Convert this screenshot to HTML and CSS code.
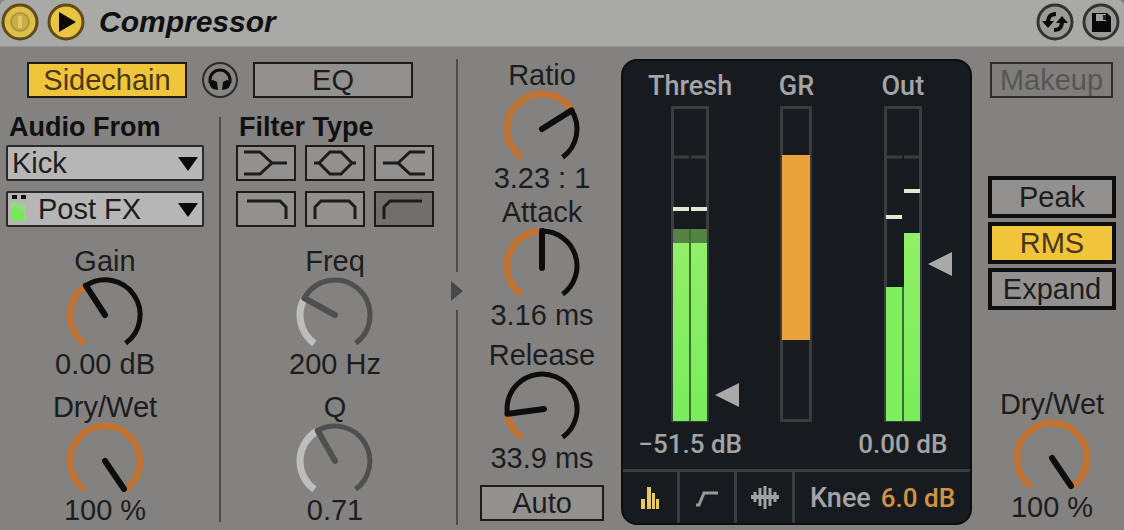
FILE: index.html
```html
<!DOCTYPE html>
<html lang="en">
<head>
<meta charset="utf-8">
<title>Compressor</title>
<link rel="stylesheet" href="styles.css">
</head>
<body>
<main class="device">
  <header class="titlebar">
    <button class="round" type="button" aria-label="Device on">
      <svg width="38" height="38" viewBox="0 0 38 38"><circle cx="19" cy="19" r="17" fill="#dcc04c" stroke="#604a16" stroke-width="3"/><circle cx="19" cy="19" r="9" fill="#c9ae48" stroke="#b0963c" stroke-width="2"/><path d="M19 13v12" stroke="#e0c960" stroke-width="4"/></svg>
    </button>
    <button class="round" type="button" aria-label="Preview">
      <svg width="38" height="38" viewBox="0 0 38 38"><circle cx="19" cy="19" r="17" fill="#e9c443" stroke="#604a16" stroke-width="3"/><path d="M12 9L29 19L12 29Z" fill="#0c0a04"/></svg>
    </button>
    <h1 class="name">Compressor</h1>
    <button class="round round-end" type="button" aria-label="Hot-swap preset">
      <svg width="38" height="38" viewBox="0 0 38 38"><circle cx="19" cy="19" r="17" fill="#9a9a99" stroke="#333" stroke-width="3"/><g fill="none" stroke="#0b0b0b" stroke-width="4"><path d="M12 20C12 14 14 11 20 11"/><path d="M26 18C26 24 24 27 18 27"/></g><path d="M6 18H18L12 25ZM20 20H32L26 13Z" fill="#0b0b0b"/></svg>
    </button>
    <button class="round" type="button" aria-label="Save preset">
      <svg width="38" height="38" viewBox="0 0 38 38"><circle cx="19" cy="19" r="17" fill="#9a9a99" stroke="#333" stroke-width="3"/><path d="M10 10H25L29 14V29H10Z" fill="#080808"/><path d="M14 11H24V18H14Z" fill="#a2a2a2"/><path d="M21 12H24V17H21Z" fill="#222"/></svg>
    </button>
  </header>

  <div class="panels">
    <section class="sidechain">
      <div class="switches">
        <button class="btn btn-on btn-wide" type="button" aria-pressed="true">Sidechain</button>
        <button class="round" type="button" aria-label="Sidechain listen">
          <svg width="38" height="38" viewBox="0 0 38 38"><circle cx="19" cy="19" r="17" fill="#858483" stroke="#2b2b2b" stroke-width="2"/><path d="M9 22V19A10 10 0 0 1 29 19V22" fill="none" stroke="#0c0c0c" stroke-width="3"/><path d="M8 20L12 19L16 21L17 29L12 28Q8 25 8 20ZM30 20L26 19L22 21L21 29L26 28Q30 25 30 20Z" fill="#0c0c0c"/></svg>
        </button>
        <button class="btn btn-wide" type="button">EQ</button>
      </div>

      <div class="routing">
        <div class="column">
          <h2 class="heading">Audio From</h2>
          <div class="picker">
            <select class="select" aria-label="Audio source"><option>Kick</option></select>
            <svg class="arrow" width="20" height="14" viewBox="0 0 20 14"><path d="M0 0H20L10 14Z" fill="#0a0a0a"/></svg>
          </div>
          <div class="picker">
            <select class="select select-metered" aria-label="Tap point"><option>Post FX</option></select>
            <svg class="level" width="20" height="30" viewBox="0 0 20 30"><path d="M3 1H8V5H3ZM12 1H17V5H12Z" fill="#111"/><path d="M2 9L7 7L9 12L11 9L17 10V27H2Z" fill="#98d880"/><path d="M2 15L7 12L12 18L15 17V27H2Z" fill="#73ea59"/></svg>
            <svg class="arrow" width="20" height="14" viewBox="0 0 20 14"><path d="M0 0H20L10 14Z" fill="#0a0a0a"/></svg>
          </div>
          <div class="knobs">
            <div class="knob">
              <label for="gain">Gain</label>
              <div class="dial"><svg width="84" height="73" viewBox="0 0 84 73"><path class="value" d="M21.4 67.3A35 35 0 0 1 23 9.6"/><path class="track" d="M23 9.6A35 35 0 0 1 62.6 67.3"/><path class="needle" d="M42 39L23 9.6"/></svg><input id="gain" type="range" min="-70" max="24" value="0"></div>
              <output for="gain">0.00 dB</output>
            </div>
            <div class="knob">
              <label for="scmix">Dry/Wet</label>
              <div class="dial"><svg width="84" height="73" viewBox="0 0 84 73"><path class="value" d="M21.4 67.3A35 35 0 1 1 62.6 67.3"/><path class="needle" d="M42 39L61 67"/></svg><input id="scmix" type="range" value="100"></div>
              <output for="scmix">100 %</output>
            </div>
          </div>
        </div>

        <div class="rule"></div>

        <div class="column">
          <h2 class="heading">Filter Type</h2>
          <div class="filters">
            <button class="btn" type="button" aria-label="Low shelf"><svg width="56" height="32" viewBox="0 0 56 32"><path d="M6 5H22L34 16M6 27H22L34 16H49"/></svg></button>
            <button class="btn" type="button" aria-label="Bell"><svg width="56" height="32" viewBox="0 0 56 32"><path d="M7 16H12L23 5H34L45 16H49M12 16L23 27H34L45 16"/></svg></button>
            <button class="btn" type="button" aria-label="High shelf"><svg width="56" height="32" viewBox="0 0 56 32"><path d="M49 5H34L22 16M49 27H34L22 16H7"/></svg></button>
            <button class="btn" type="button" aria-label="Low-pass"><svg width="56" height="32" viewBox="0 0 56 32"><path d="M9 8H42L48 14V26"/></svg></button>
            <button class="btn" type="button" aria-label="Band-pass"><svg width="56" height="32" viewBox="0 0 56 32"><path d="M8 26V14L14 8H42L48 14V26"/></svg></button>
            <button class="btn btn-pressed" type="button" aria-label="High-pass" aria-pressed="true"><svg width="56" height="32" viewBox="0 0 56 32"><path d="M8 26V14L14 8H46"/></svg></button>
          </div>
          <div class="knobs">
            <div class="knob knob-off">
              <label for="freq">Freq</label>
              <div class="dial"><svg width="84" height="73" viewBox="0 0 84 73"><path class="value" d="M21.4 67.3A35 35 0 0 1 11.3 22.2"/><path class="track" d="M11.3 22.2A35 35 0 1 1 62.6 67.3"/><path class="needle" d="M42 39L11.3 22.2"/></svg><input id="freq" type="range" min="30" max="15000" value="200"></div>
              <output for="freq">200 Hz</output>
            </div>
            <div class="knob knob-off">
              <label for="q">Q</label>
              <div class="dial"><svg width="84" height="73" viewBox="0 0 84 73"><path class="value" d="M21.4 67.3A35 35 0 0 1 24.7 8.6"/><path class="track" d="M24.7 8.6A35 35 0 0 1 62.6 67.3"/><path class="needle" d="M42 39L24.7 8.6"/></svg><input id="q" type="range" min="0" max="12" step="0.01" value="0.71"></div>
              <output for="q">0.71</output>
            </div>
          </div>
        </div>
      </div>
    </section>

    <div class="fold">
      <span class="fold-line"></span>
      <button class="fold-btn" type="button" aria-label="Hide sidechain"><svg width="12" height="20" viewBox="0 0 12 20"><path d="M0 0L12 10L0 20Z" fill="#484848"/></svg></button>
      <span class="fold-line"></span>
    </div>

    <section class="envelope">
      <div class="knob knob-ratio">
        <label for="ratio">Ratio</label>
        <div class="dial"><svg width="84" height="73" viewBox="0 0 84 73"><path class="value" d="M21.4 67.3A35 35 0 1 1 71.6 20.4"/><path class="track" d="M71.6 20.4A35 35 0 0 1 62.6 67.3"/><path class="needle" d="M42 39L71.6 20.4"/></svg><input id="ratio" type="range" min="1" max="100" step="0.01" value="3.23"></div>
        <output for="ratio">3.23 : 1</output>
      </div>
      <div class="knob knob-attack">
        <label for="attack">Attack</label>
        <div class="dial"><svg width="84" height="73" viewBox="0 0 84 73"><path class="value" d="M21.4 67.3A35 35 0 0 1 42 4"/><path class="track" d="M42 4A35 35 0 0 1 62.6 67.3"/><path class="needle" d="M42 41V4"/></svg><input id="attack" type="range" min="0" max="1000" step="0.01" value="3.16"></div>
        <output for="attack">3.16 ms</output>
      </div>
      <div class="knob">
        <label for="release">Release</label>
        <div class="dial"><svg width="84" height="73" viewBox="0 0 84 73"><path class="value" d="M21.4 67.3A35 35 0 0 1 7.4 43.8"/><path class="track" d="M7.4 43.8A35 35 0 1 1 62.6 67.3"/><path class="needle" d="M44 39L7.4 43.8"/></svg><input id="release" type="range" min="1" max="3000" step="0.1" value="33.9"></div>
        <output for="release">33.9 ms</output>
      </div>
      <button class="btn btn-auto" type="button">Auto</button>
    </section>

    <section class="display">
      <div class="meters">
        <div class="meter">
          <h3>Thresh</h3>
          <svg width="38" height="316" viewBox="0 0 38 316">
            <rect class="frame" x="1.5" y="1.5" width="35" height="313"/>
            <path class="tick" d="M3 51H18M20 51H35"/>
            <path class="peak" d="M2 103H18M20 103H36"/>
            <path d="M2 123H36V137H2Z" fill="#568344"/>
            <path d="M2 137H36V315H2Z" fill="url(#green)"/>
            <path d="M18 123H20V315H18Z" fill="#3c7030"/>
            <path class="handle" d="M44 289L68 277V301Z"/>
            <defs><linearGradient id="green" x1="0" y1="0" x2="0" y2="1"><stop offset="0" stop-color="#92ee68"/><stop offset="1" stop-color="#78ed5b"/></linearGradient></defs>
          </svg>
          <output>−51.5 dB</output>
        </div>
        <div class="meter">
          <h3>GR</h3>
          <svg width="32" height="316" viewBox="0 0 32 316">
            <rect class="frame" x="1.5" y="1.5" width="29" height="313"/>
            <path d="M2 49H30V234H2Z" fill="#eaa23a"/>
          </svg>
        </div>
        <div class="meter">
          <h3>Out</h3>
          <svg width="38" height="316" viewBox="0 0 38 316">
            <rect class="frame" x="1.5" y="1.5" width="35" height="313"/>
            <path class="tick" d="M3 51H18M20 51H35"/>
            <path class="peak" d="M2 111H18M20 85H36"/>
            <path d="M2 181H18V315H2Z" fill="#7def5e"/>
            <path d="M20 127H36V315H20Z" fill="url(#green)"/>
            <path d="M18 181H20V315H18Z" fill="#3c7030"/>
            <path class="handle" d="M44 158L68 146V170Z"/>
          </svg>
          <output>0.00 dB</output>
        </div>
      </div>
      <div class="views">
        <button class="view" type="button" aria-label="Level meters" aria-pressed="true"><svg width="20" height="24" viewBox="0 0 20 24"><path d="M1 13H5V23H1ZM7 1H11V23H7ZM12 7H15V23H12ZM16 13H19V23H16Z" fill="#e8c95e"/></svg></button>
        <button class="view" type="button" aria-label="Transfer curve"><svg width="24" height="20" viewBox="0 0 24 20"><path d="M1 17H4L9 5H23" fill="none" stroke="#98999b" stroke-width="3"/></svg></button>
        <button class="view" type="button" aria-label="Activity view"><svg width="28" height="24" viewBox="0 0 28 24"><path d="M0 11H28" fill="none" stroke="#a0a1a3" stroke-width="4"/><path d="M4 6V16M9 2V20M14 0V23M19 2V20M24 6V16" fill="none" stroke="#a0a1a3" stroke-width="3"/></svg></button>
        <div class="knee"><label for="knee">Knee</label><input id="knee" type="text" value="6.0 dB"></div>
      </div>
    </section>

    <section class="output">
      <button class="btn btn-dim" type="button" disabled>Makeup</button>
      <div class="modes">
        <button class="btn btn-mode" type="button">Peak</button>
        <button class="btn btn-mode btn-on" type="button" aria-pressed="true">RMS</button>
        <button class="btn btn-mode" type="button">Expand</button>
      </div>
      <div class="knob">
        <label for="mix">Dry/Wet</label>
        <div class="dial"><svg width="84" height="73" viewBox="0 0 84 73"><path class="value" d="M21.4 67.3A35 35 0 1 1 62.6 67.3"/><path class="needle" d="M42 39L61 67"/></svg><input id="mix" type="range" value="100"></div>
        <output for="mix">100 %</output>
      </div>
    </section>
  </div>
</main>
</body>
</html>
```
FILE: styles.css
```css
* { box-sizing: border-box; }

body {
  margin: 0;
  background: #838281;
  color: #1d1d1d;
  font-family: "Liberation Sans", Arial, sans-serif;
  font-size: 29px;
  line-height: 30px;
}

button, input, select {
  margin: 0;
  padding: 0;
  border: 0;
  background: none;
  color: inherit;
  font: inherit;
}

svg { display: block; overflow: visible; }
h1, h2, h3 { margin: 0; }

.titlebar {
  display: flex;
  align-items: center;
  gap: 8px;
  height: 47px;
  padding: 0 4px 2px 1px;
  background: #a9a9a7;
  border-bottom: 1px solid #93938f;
  border-radius: 6px 6px 0 0;
}

.name {
  padding-left: 6px;
  color: #101010;
  font-size: 30px;
  font-style: italic;
  line-height: 34px;
}

.round { flex: none; border-radius: 50%; }
.round-end { margin-left: auto; }

.panels {
  display: grid;
  grid-template-columns: 450fr 13px 158fr 351fr 152fr;
  padding: 12px 0 4px;
}

.btn {
  height: 36px;
  background: #929190;
  border: 2px solid #1c1c1c;
  text-align: center;
  white-space: nowrap;
}

.btn-on { background: #f0c53c; color: #4a3710; }
.btn-wide { flex: 0 1 160px; }

/* Sidechain */
.sidechain { padding: 3px 16px 0 6px; }

.switches {
  display: flex;
  justify-content: center;
  align-items: center;
  gap: 14px;
  height: 36px;
}

.routing {
  display: grid;
  grid-template-columns: 1fr 2px 1fr;
  gap: 15px;
  margin-top: 14px;
}

.rule { margin: 5px 0 3px; background: #4c4c4c; }

.column { display: flex; flex-direction: column; }

.heading {
  margin-bottom: 3px;
  padding-left: 3px;
  color: #101010;
  font-size: 27px;
  line-height: 30px;
}

.picker { position: relative; margin-bottom: 10px; }

.select {
  display: block;
  width: 100%;
  height: 36px;
  padding-left: 4px;
  appearance: none;
  background: #b6b6b6;
  border: 2px solid #2a2a2a;
  border-radius: 2px;
}

.select-metered { padding-left: 30px; }
.arrow { position: absolute; top: 12px; right: 6px; pointer-events: none; }
.level { position: absolute; top: 3px; left: 3px; pointer-events: none; }

.filters {
  display: grid;
  grid-template-columns: repeat(3, 1fr);
  gap: 10px 9px;
  margin-bottom: 10px;
}

.filters .btn { display: flex; justify-content: center; align-items: center; }
.filters path { fill: none; stroke: #1c1c1c; stroke-width: 3; }
.btn-pressed { background: #706f6c; }

/* Knobs */
.knobs {
  display: flex;
  flex-direction: column;
  gap: 13px;
  margin-top: 9px;
}

.knob {
  display: flex;
  flex-direction: column;
  align-items: center;
  white-space: nowrap;
}

.dial { position: relative; }

.dial input {
  position: absolute;
  inset: 0;
  width: 100%;
  height: 100%;
  opacity: 0;
}

.dial path { fill: none; }
.track { stroke: #0d0d0d; stroke-width: 5; }
.value { stroke: #bf7335; stroke-width: 7; }
.needle { stroke: #0d0d0d; stroke-width: 6; stroke-linecap: round; }
.knob-off .track, .knob-off .needle { stroke: #4f4f4f; }
.knob-off .value { stroke: #bdbdbd; }

/* Fold handle */
.fold {
  display: flex;
  flex-direction: column;
  align-items: center;
}

.fold-line { flex: 234; width: 2px; background: #4c4c4c; }
.fold-line:first-child { flex: 232; }
.fold-btn { height: 20px; margin: 9px 0; }

/* Envelope */
.envelope {
  display: flex;
  flex-direction: column;
  align-items: center;
  padding-top: 1px;
}

.knob-ratio { margin-bottom: 4px; }
.knob-attack { margin-bottom: 10px; }
.btn-auto { width: 124px; margin-top: 12px; }

/* Display */
.display {
  display: flex;
  flex-direction: column;
  overflow: hidden;
  background: #171b20;
  border: 2px solid #0c0e11;
  border-radius: 16px;
  color: #a3a4a6;
  font-family: Roboto, sans-serif;
  font-size: 26px;
  font-weight: 500;
}

.meters {
  display: grid;
  grid-template-columns: repeat(3, 1fr);
  padding: 10px 14px;
}

.meter {
  display: flex;
  flex-direction: column;
  align-items: center;
  white-space: nowrap;
}

.meter h3 { margin-bottom: 5px; font-size: 27px; font-weight: 500; }
.meter output { margin-top: 7px; }
.frame { fill: none; stroke: #3b3c3f; stroke-width: 3; }
.tick { stroke: #3b3c3f; stroke-width: 3; }
.peak { stroke: #dfe8d2; stroke-width: 4; }
.handle { fill: #a9a9a9; }

.views {
  display: grid;
  grid-template-columns: 57px 57px 58px 1fr;
  flex: 1;
  border-top: 3px solid #3b3c3f;
}

.view {
  display: flex;
  justify-content: center;
  align-items: center;
  border-right: 3px solid #3b3c3f;
}

.knee {
  display: flex;
  align-items: center;
  gap: 10px;
  padding-left: 15px;
  font-size: 27px;
}

.knee input {
  flex: 1;
  min-width: 0;
  color: #d39242;
  font-size: 26px;
}

/* Output */
.output {
  display: flex;
  flex-direction: column;
  padding: 3px 8px 3px 16px;
}

.btn-dim {
  margin: 0 3px 0 2px;
  background: #7f7e7d;
  border-color: #2c2c2c;
  color: #575655;
}

.modes {
  display: flex;
  flex-direction: column;
  gap: 4px;
  margin: 78px 0 auto;
}

.btn-mode { height: 42px; border: 4px solid #0e0e0e; }
```
